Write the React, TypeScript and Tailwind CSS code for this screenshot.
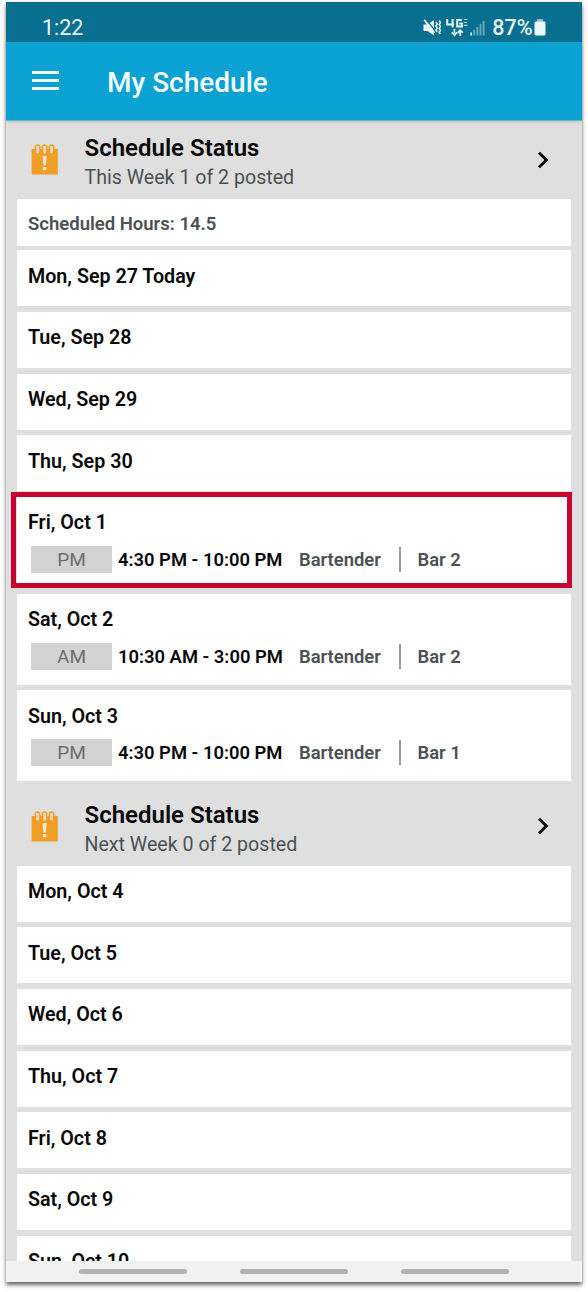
type Shift = {
  period: "AM" | "PM";
  time: string;
  role: string;
  location: string;
};

type Day = {
  label: string;
  shift?: Shift;
  highlighted?: boolean;
};

const THIS_WEEK: Day[] = [
  { label: "Mon, Sep 27 Today" },
  { label: "Tue, Sep 28" },
  { label: "Wed, Sep 29" },
  { label: "Thu, Sep 30" },
  {
    label: "Fri, Oct 1",
    highlighted: true,
    shift: { period: "PM", time: "4:30 PM - 10:00 PM", role: "Bartender", location: "Bar 2" },
  },
  {
    label: "Sat, Oct 2",
    shift: { period: "AM", time: "10:30 AM - 3:00 PM", role: "Bartender", location: "Bar 2" },
  },
  {
    label: "Sun, Oct 3",
    shift: { period: "PM", time: "4:30 PM - 10:00 PM", role: "Bartender", location: "Bar 1" },
  },
];

const NEXT_WEEK: Day[] = [
  { label: "Mon, Oct 4" },
  { label: "Tue, Oct 5" },
  { label: "Wed, Oct 6" },
  { label: "Thu, Oct 7" },
  { label: "Fri, Oct 8" },
  { label: "Sat, Oct 9" },
  { label: "Sun, Oct 10" },
];

// ─── Status bar ───────────────────────────────────────────────────────────────
function StatusIcons() {
  return (
    <svg width="64" height="22" viewBox="0 0 64 22" fill="none" aria-hidden="true">
      {/* Muted speaker with vibration marks */}
      <path d="M0.5 7.5h4l6.5-4.5v15.5l-6.5-4.5h-4z" fill="#e9f8fc" />
      <path d="M2.6 2L12 13.5" stroke="#086f90" strokeWidth="1.2" />
      <path d="M1.2 2.7L11.5 16" stroke="#e9f8fc" strokeWidth="1.8" />
      <path d="M13 5l1.2 2-1.2 2 1.2 2-1.2 2 1.2 2M16.2 3.5l1.2 2-1.2 2 1.2 2-1.2 2 1.2 2-1.2 2 1 1.5" stroke="#e9f8fc" strokeWidth="1.5" />
      {/* 4G LTE */}
      <path d="M24.2 2v5.5h6.8M29.6 2v8.5M38.8 3H34.2v6.5h4.8V6.6h-2.6" stroke="#e9f8fc" strokeWidth="2" />
      <path d="M41 2.5h3.5M41 5.5h3M41 8.3h3.5" stroke="#a9d2df" strokeWidth="1.2" />
      <path d="M31.4 12v6M28.8 15.4l2.6 2.8 2.6-2.8M37.2 19v-6M34.6 15.8l2.6-2.8 2.6 2.8" stroke="#e9f8fc" strokeWidth="1.7" />
      {/* Signal strength */}
      <path d="M48.2 15.5v3" stroke="#e9f8fc" strokeWidth="1.7" />
      <path d="M51.2 12.8v5.7M54.4 10v8.5M57.5 7v11.5M60.6 4v14.5" stroke="#63a9bf" strokeWidth="1.9" />
    </svg>
  );
}

function StatusBar() {
  return (
    <div className="flex h-10 shrink-0 items-center bg-[#086f90] pt-[11px] pr-[36px] pl-[36px] text-[#e9f8fc]">
      <span className="text-[21.5px] leading-6">1:22</span>
      <div className="ml-auto flex items-center">
        <StatusIcons />
        <span className="ml-[5px] text-[21.5px] leading-6 font-medium">87%</span>
        <svg className="ml-[1.5px]" width="12" height="20" viewBox="0 0 12 20" aria-hidden="true">
          <path d="M3 1h6v3H3z" fill="#8dbdcc" />
          <rect x="0.5" y="3.5" width="11" height="14" rx="1.2" fill="#e9f8fc" />
        </svg>
      </div>
    </div>
  );
}

function AppBar() {
  return (
    <header className="z-10 flex h-[79px] shrink-0 items-center border-b border-[#65b9d3] bg-[#0ca1d3] pl-[26px] text-[#f1fbfe] shadow-sm">
      <button aria-label="Open menu" className="mb-[1px] flex w-[27px] flex-col gap-[5px]">
        <span className="h-[3px] bg-current" />
        <span className="h-[3px] bg-current" />
        <span className="h-[3px] bg-current" />
      </button>
      <h1 className="ml-[48px] pt-[3px] text-[28px] leading-8 font-medium">My Schedule</h1>
    </header>
  );
}

// ─── Schedule ─────────────────────────────────────────────────────────────────
function CalendarAlertIcon() {
  return (
    <svg className="block" width="27" height="32" viewBox="0 0 27 32" fill="none" aria-hidden="true">
      <path d="M0.6 5h26.2v25.5H0.6z" fill="#f19e26" />
      {/* Binding rings */}
      <path
        d="M6.6 8V3.5M13.6 8V3.5M20.6 8V3.5"
        stroke="#e9d9c0"
        strokeWidth="3"
        strokeLinecap="round"
      />
      <path
        d="M4.4 7V3.1a2.2 2.2 0 0 1 4.4 0V6M11.4 7V3.1a2.2 2.2 0 0 1 4.4 0V6M18.4 7V3.1a2.2 2.2 0 0 1 4.4 0V6"
        stroke="#f19e26"
        strokeWidth="1.5"
      />
      <path d="M11.6 12h4l-.8 9.5h-2.4z" fill="#f8ead5" />
      <circle cx="13.6" cy="24.6" r="1.9" fill="#f8ead5" />
    </svg>
  );
}

function WeekHeader({ summary }: { summary: string }) {
  return (
    <button className="flex w-full items-start pt-[23px] pr-[22px] pl-[14px] text-left">
      <CalendarAlertIcon />
      <div className="-mt-[10px] ml-[26.5px]">
        <h2 className="text-[24px] leading-[28px] font-semibold text-[#080808]">Schedule Status</h2>
        <p className="mt-[2px] text-[19.6px] leading-[28px] font-[450] text-[#4b5153]">{summary}</p>
      </div>
      <svg className="mt-[6.5px] ml-auto" width="12" height="18" viewBox="0 0 12 18" fill="none" aria-hidden="true">
        <path d="M2 1.8L9.4 9l-7.4 7.2" stroke="#080808" strokeWidth="2.9" />
      </svg>
    </button>
  );
}

function ShiftRow({ shift }: { shift: Shift }) {
  return (
    <div className="ml-[14px] flex h-[27px] items-center text-[18.4px] leading-[27px] font-semibold">
      <span className="h-[27px] w-[81px] bg-[#d3d3d3] text-center text-[19px] leading-[27px] font-[450] text-[#6d6d6d]">
        {shift.period}
      </span>
      <span className="ml-[6px] w-[181px] whitespace-nowrap text-[#080808]">{shift.time}</span>
      <span className="w-[100px] text-[#4b5153]">{shift.role}</span>
      <span className="h-[25px] w-[2px] bg-[#9a9c9d]" />
      <span className="ml-[16.5px] text-[#4b5153]">{shift.location}</span>
    </div>
  );
}

function DayCard({ day }: { day: Day }) {
  return (
    <li className={`relative bg-white ${day.shift ? "h-[91px]" : "h-[56px]"}`}>
      <h3 className="pt-[14.3px] pl-[11px] text-[19.7px] leading-6 font-semibold text-[#080808]">{day.label}</h3>
      {day.shift && (
        <div className="pt-[10.7px]">
          <ShiftRow shift={day.shift} />
        </div>
      )}
      {day.highlighted && (
        <div className="absolute -top-[5px] -right-[1px] -left-[6px] h-[96px] border-[5px] border-[#c60631]" />
      )}
    </li>
  );
}

function DayList({ days }: { days: Day[] }) {
  return (
    <ul className="flex flex-col gap-[5.67px]">
      {days.map((day) => (
        <DayCard key={day.label} day={day} />
      ))}
    </ul>
  );
}

function NavigationBar() {
  return (
    <div className="flex h-[21px] shrink-0 items-center justify-center gap-[53px] bg-[#f1f1f1]">
      <span className="h-[5px] w-[108px] rounded-full bg-[#b3b3b3]" />
      <span className="h-[5px] w-[108px] rounded-full bg-[#b3b3b3]" />
      <span className="h-[5px] w-[108px] rounded-full bg-[#b3b3b3]" />
    </div>
  );
}

export default function App() {
  return (
    <div className="h-[1292px] w-[588px] overflow-hidden bg-white pt-[2px] pl-[6px] font-[Roboto,sans-serif]">
      <div className="flex h-[1280px] w-[576px] flex-col shadow-[0_3px_4px_rgba(0,0,0,0.6)]">
        <StatusBar />
        <AppBar />
        <main className="min-h-0 flex-1 overflow-hidden bg-[#dfdfdf] px-[11px]">
          <section className="h-[660.4px]">
            <div className="h-[78px]">
              <WeekHeader summary="This Week 1 of 2 posted" />
            </div>
            <p className="mb-[4.4px] flex h-[47px] items-center bg-white pt-[4px] pl-[11px] text-[18.5px] font-semibold text-[#4b5153]">
              Scheduled Hours: 14.5
            </p>
            <DayList days={THIS_WEEK} />
          </section>
          <section>
            <div className="h-[84.4px] pt-[6.5px]">
              <WeekHeader summary="Next Week 0 of 2 posted" />
            </div>
            <DayList days={NEXT_WEEK} />
          </section>
        </main>
        <NavigationBar />
      </div>
    </div>
  );
}
